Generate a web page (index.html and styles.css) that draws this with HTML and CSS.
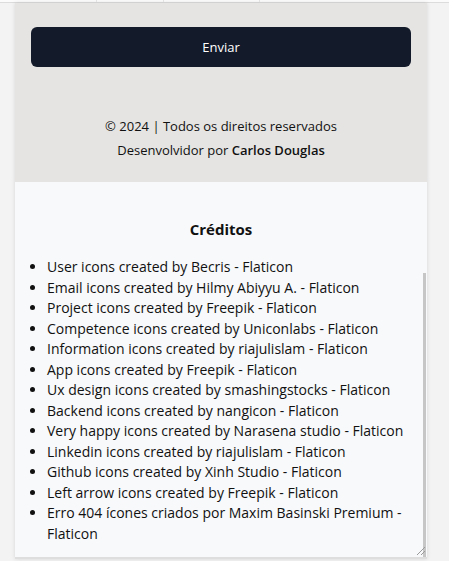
FILE: index.html
```html
<!DOCTYPE html>
<html lang="pt-BR">
<head>
<meta charset="utf-8">
<title>Créditos</title>
<link rel="stylesheet" href="styles.css">
</head>
<body>
<div class="topstrip">
  <span class="cell"></span><span class="cell"></span><span class="cell"></span><span class="cell last"></span>
</div>
<main class="page">
  <footer class="footer">
    <button class="send" type="button">Enviar</button>
    <div class="copy">
      <p>© 2024 | Todos os direitos reservados</p>
      <p>Desenvolvidor por <strong>Carlos Douglas</strong></p>
    </div>
  </footer>
  <section class="credits">
    <h2>Créditos</h2>
    <ul>
      <li>User icons created by Becris - Flaticon</li>
      <li>Email icons created by Hilmy Abiyyu A. - Flaticon</li>
      <li>Project icons created by Freepik - Flaticon</li>
      <li>Competence icons created by Uniconlabs - Flaticon</li>
      <li>Information icons created by riajulislam - Flaticon</li>
      <li>App icons created by Freepik - Flaticon</li>
      <li>Ux design icons created by smashingstocks - Flaticon</li>
      <li>Backend icons created by nangicon - Flaticon</li>
      <li>Very happy icons created by Narasena studio - Flaticon</li>
      <li>Linkedin icons created by riajulislam - Flaticon</li>
      <li>Github icons created by Xinh Studio - Flaticon</li>
      <li>Left arrow icons created by Freepik - Flaticon</li>
      <li>Erro 404 ícones criados por Maxim Basinski Premium - Flaticon</li>
    </ul>
    <span class="thumb"></span>
    <svg class="grip" width="12" height="12" viewBox="0 0 12 12"><path d="M11 3 L3 11 M11 7 L7 11" stroke="#9a9a9a" stroke-width="1"/></svg>
  </section>
</main>
</body>
</html>
```
FILE: styles.css
```css
html, body { margin: 0; padding: 0; }
body {
  background: #f3f3f3;
  font-family: "Open Sans", "Noto Sans", sans-serif;
  color: #111;
  height: 561px;
  overflow: hidden;
}
.topstrip {
  display: grid;
  grid-template-columns: 97px 67px 96px 1fr;
  height: 2px;
  background: #fbfbfb;
  border-bottom: 1px solid #dcdcdc;
}
.cell { border-right: 1px solid #e2e2e2; }
.cell.last { border-right: none; }
.page {
  margin-left: 15px;
  width: 412px;
  box-shadow: 0 0 4px rgba(0,0,0,0.12);
}
.footer {
  background: #e5e4e2;
  padding: 24px 16px 20px;
}
.send {
  display: block;
  width: 100%;
  height: 40px;
  border: none;
  border-radius: 6px;
  background: #131a29;
  color: #fff;
  font-family: inherit;
  font-size: 13px;
}
.copy {
  margin-top: 47px;
  text-align: center;
  font-size: 13px;
  line-height: 24px;
  color: #111;
}
.copy p { margin: 0; }
.copy strong { font-weight: 600; }
.credits {
  position: relative;
  background: #f8f9fb;
  padding: 36px 16px 14px;
  height: 325px;
  border-bottom: 2px solid #dedede;
}
.credits h2 {
  margin: 0 0 17px;
  text-align: center;
  font-size: 15px;
  font-weight: 700;
  line-height: 22px;
}
.credits ul {
  margin: 0;
  padding-left: 16px;
  font-size: 14px;
  line-height: 20.5px;
}
.thumb {
  position: absolute;
  right: 1px;
  top: 91px;
  width: 3px;
  bottom: 0;
  background: #c6c6c6;
}
.grip {
  position: absolute;
  right: 1px;
  bottom: 1px;
}
```
